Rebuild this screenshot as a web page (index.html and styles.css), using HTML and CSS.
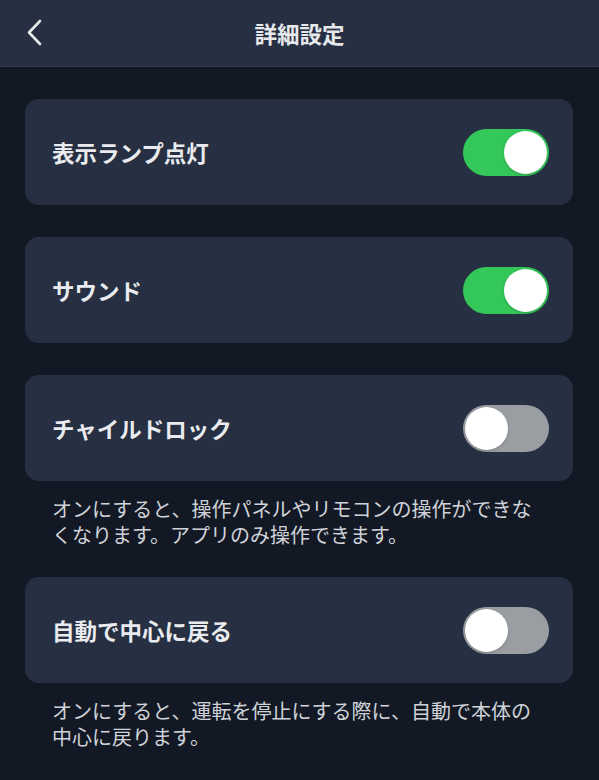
FILE: index.html
```html
<!DOCTYPE html>
<html lang="ja">
<head>
  <meta charset="UTF-8" />
  <title>詳細設定</title>
  <link rel="stylesheet" href="styles.css">
</head>
<body>
<div class="header">
  <div class="back">
    <svg width="18" height="28" viewBox="0 0 18 28">
      <path d="M14 2 L3 13.5 L14 25" fill="none" stroke="#e6e8eb" stroke-width="2.6" stroke-linecap="round" stroke-linejoin="round"/>
    </svg>
  </div>
  <h1>詳細設定</h1>
  <div></div>
</div>

<div class="content">
  <div class="card">
    <span class="label">表示ランプ点灯</span>
    <div class="switch on"><span class="knob"></span></div>
  </div>

  <div class="card">
    <span class="label">サウンド</span>
    <div class="switch on"><span class="knob"></span></div>
  </div>

  <div class="card">
    <span class="label">チャイルドロック</span>
    <div class="switch"><span class="knob"></span></div>
  </div>
  <p class="note">オンにすると、操作パネルやリモコンの操作ができなくなります。アプリのみ操作できます。</p>

  <div class="card">
    <span class="label">自動で中心に戻る</span>
    <div class="switch"><span class="knob"></span></div>
  </div>
  <p class="note">オンにすると、運転を停止にする際に、自動で本体の中心に戻ります。</p>
</div>
</body>
</html>
```

FILE: styles.css
```css
body {
  margin: 0;
  background: #131924;
  font-family: "Noto Sans CJK JP", "Noto Sans", sans-serif;
  color: #e9ebee;
  min-height: 100vh;
}
.header {
  height: 66px;
  background: #263042;
  border-bottom: 1px solid #333d4e;
  display: grid;
  grid-template-columns: 1fr auto 1fr;
  align-items: center;
}
.back {
  padding-left: 26px;
  display: flex;
  align-items: center;
}
.header h1 {
  margin: 0;
  font-size: 22.5px;
  font-weight: 700;
  color: #e6e8eb;
}
.content {
  padding: 32px 26px 0 25px;
}
.card {
  height: 106px;
  background: #263042;
  border-radius: 14px;
  display: flex;
  align-items: center;
  justify-content: space-between;
  padding: 0 24px 0 27px;
  margin-bottom: 32px;
}
.label {
  font-size: 22.5px;
  font-weight: 700;
  color: #e9ebee;
}
.switch {
  width: 86px;
  height: 47px;
  border-radius: 24px;
  background: #9a9ea2;
  display: flex;
  align-items: center;
  padding: 0 2px;
  box-sizing: border-box;
}
.switch.on {
  background: #34c759;
  justify-content: flex-end;
}
.knob {
  width: 43px;
  height: 43px;
  border-radius: 50%;
  background: #fff;
  box-shadow: 0 1px 3px rgba(0,0,0,0.2);
}
.note {
  margin: -17px 35px 29px 27px;
  font-size: 20px;
  line-height: 26px;
  color: #cfd3d9;
}
```
